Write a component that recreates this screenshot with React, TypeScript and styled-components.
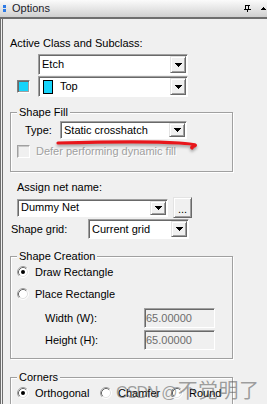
import React from "react";
import styled, { createGlobalStyle } from "styled-components";

const GlobalStyle = createGlobalStyle`
    html, body {
        margin: 0;
        padding: 0;
        background: #f0f0f0;
    }
    body {
        font-family: "Liberation Sans", Arial, sans-serif;
        font-size: 11px;
        color: #000;
    }
`;

const Window = styled.div`
    position: relative;
    width: 267px;
    height: 404px;
    overflow: hidden;
    display: flex;
    flex-direction: column;
    background: #f0f0f0;
`;

const TitleBar = styled.div`
    flex: none;
    height: 17px;
    display: flex;
    align-items: center;
    padding: 0 1px 0 3px;
    background: linear-gradient(#fbfbfb, #e4e4e4 55%, #cfcfcf);
    border-bottom: 2px solid #6e6e6e;
`;

const Grip = styled.div`
    display: flex;
    flex-direction: column;
    gap: 1px;
    margin-right: 6px;

    span {
        width: 3px;
        height: 3px;
        background: #2f7be6;
    }
`;

const TitleText = styled.div`
    font-size: 11px;
    color: #1c1c2a;
    line-height: 13px;
`;

const TitleTools = styled.div`
    margin-left: auto;
    display: flex;
    align-items: center;
    gap: 10px;
`;

const Panel = styled.div`
    flex: 1;
    display: flex;
    flex-direction: column;
    border-left: 3px double #6e6e6e;
`;

const Label = styled.div<{ $top: number; $left: number }>`
    margin: ${(p) => p.$top}px 0 0 ${(p) => p.$left}px;
    line-height: 13px;
    white-space: nowrap;
`;

const Row = styled.div<{ $top: number; $left: number; $h: number }>`
    display: flex;
    align-items: center;
    height: ${(p) => p.$h}px;
    margin: ${(p) => p.$top}px 0 0 ${(p) => p.$left}px;
    white-space: nowrap;
`;

const FieldLabel = styled.div<{ $w: number }>`
    width: ${(p) => p.$w}px;
    flex: none;
    line-height: 13px;
`;

const SelectBox = styled.div<{ $w: number; $h: number }>`
    box-sizing: border-box;
    flex: none;
    width: ${(p) => p.$w}px;
    height: ${(p) => p.$h}px;
    display: flex;
    align-items: stretch;
    padding: 1px;
    background: #fff;
    border: 1px solid;
    border-color: #a0a0a0 #ffffff #ffffff #a0a0a0;
    box-shadow: inset 1px 1px 0 #696969;
`;

const SelectText = styled.div`
    flex: 1;
    display: flex;
    align-items: center;
    padding-left: 2px;
    line-height: 13px;
    overflow: hidden;
`;

const ColorChip = styled.span`
    box-sizing: border-box;
    width: 10px;
    height: 14px;
    margin: 0 7px 0 1px;
    border: 1px solid #000;
    background: #17d4fa;
`;

const DropButton = styled.div`
    box-sizing: border-box;
    width: 16px;
    flex: none;
    display: flex;
    align-items: center;
    justify-content: center;
    background: #f0f0f0;
    border: 1px solid;
    border-color: #e3e3e3 #696969 #696969 #e3e3e3;
    box-shadow: inset 1px 1px 0 #fff, inset -1px -1px 0 #a0a0a0;
`;

const Swatch = styled.div`
    box-sizing: border-box;
    width: 13px;
    height: 13px;
    margin-right: 8px;
    background: #17d4fa;
    border: 1px solid;
    border-color: #808080 #ffffff #ffffff #808080;
    box-shadow: inset 1px 1px 0 #696969, inset -1px -1px 0 #a0a0a0;
`;

const Group = styled.div<{ $top: number; $h: number }>`
    box-sizing: border-box;
    width: 223px;
    height: ${(p) => p.$h}px;
    margin: ${(p) => p.$top}px 0 0 7px;
    display: flex;
    flex-direction: column;
    border: 1px solid #a0a0a0;
    box-shadow: 1px 1px 0 #fff, inset 1px 1px 0 #fff;
`;

const Legend = styled.div`
    align-self: flex-start;
    margin: -7px 0 0 6px;
    padding: 0 2px;
    line-height: 13px;
    background: #f0f0f0;
`;

const CheckBox = styled.div`
    box-sizing: border-box;
    width: 13px;
    height: 13px;
    margin-right: 6px;
    background: #f0f0f0;
    border: 1px solid;
    border-color: #a0a0a0 #ffffff #ffffff #a0a0a0;
    box-shadow: inset 1px 1px 0 #c8c8c8;
`;

const DisabledText = styled.div`
    color: #a0a0a0;
    text-shadow: 1px 1px 0 #fff;
    line-height: 13px;
`;

const SmallButton = styled.div`
    box-sizing: border-box;
    width: 19px;
    height: 21px;
    margin-left: 5px;
    display: flex;
    align-items: center;
    justify-content: center;
    padding-top: 3px;
    background: #f0f0f0;
    border: 1px solid;
    border-color: #e3e3e3 #696969 #696969 #e3e3e3;
    box-shadow: inset 1px 1px 0 #fff, inset -1px -1px 0 #a0a0a0;
`;

const NumberInput = styled.div`
    box-sizing: border-box;
    width: 71px;
    height: 20px;
    display: flex;
    align-items: center;
    padding-left: 1px;
    color: #6d6d6d;
    background: #f0f0f0;
    border: 1px solid;
    border-color: #a0a0a0 #ffffff #ffffff #a0a0a0;
    box-shadow: inset 1px 1px 0 #696969;
`;

const RadioItem = styled.div<{ $w?: number }>`
    display: flex;
    align-items: center;
    gap: 6px;
    width: ${(p) => (p.$w ? `${p.$w}px` : "auto")};
    flex: none;
    line-height: 13px;
`;

const Annotation = styled.svg`
    position: absolute;
    left: 55px;
    top: 138px;
    filter: drop-shadow(0 2px 1.5px rgba(0, 0, 0, 0.35));
`;

const Watermark = styled.div`
    position: absolute;
    left: 116px;
    top: 375px;
    display: flex;
    align-items: baseline;
    color: rgba(85, 85, 85, 0.55);
    font-family: "Liberation Sans", "Noto Sans CJK SC", sans-serif;
    white-space: nowrap;
`;

const WatermarkLatin = styled.span`
    font-size: 16px;
    letter-spacing: -0.9px;
    margin-right: 1px;
`;

const WatermarkCjk = styled.span`
    font-family: "Noto Sans CJK SC", sans-serif;
    font-size: 20px;
    letter-spacing: 0.5px;
`;

const Arrow = () => (
    <svg width="7" height="4" viewBox="0 0 7 4" shapeRendering="crispEdges">
        <path d="M0 0h7v1H0zM1 1h5v1H1zM2 2h3v1H2zM3 3h1v1H3z" fill="#000" />
    </svg>
);

const Select: React.FC<{ w: number; h: number; children?: React.ReactNode }> = ({ w, h, children }) => (
    <SelectBox $w={w} $h={h}>
        <SelectText>{children}</SelectText>
        <DropButton>
            <Arrow />
        </DropButton>
    </SelectBox>
);

const Radio: React.FC<{ checked?: boolean }> = ({ checked }) => (
    <svg width="12" height="12" viewBox="0 0 12 12">
        <circle cx="6" cy="6" r="5" fill="#fff" />
        <path d="M2.11 9.89A5.5 5.5 0 0 1 9.89 2.11" fill="none" stroke="#a0a0a0" />
        <path d="M9.89 2.11A5.5 5.5 0 0 1 2.11 9.89" fill="none" stroke="#ffffff" />
        <path d="M2.82 9.18A4.5 4.5 0 0 1 9.18 2.82" fill="none" stroke="#696969" />
        <path d="M9.18 2.82A4.5 4.5 0 0 1 2.82 9.18" fill="none" stroke="#e3e3e3" />
        {checked && <circle cx="6" cy="6" r="2" fill="#000" />}
    </svg>
);

const App: React.FC = () => {
    return (
        <Window>
            <GlobalStyle />
            <TitleBar>
                <Grip>
                    <span />
                    <span />
                </Grip>
                <TitleText>Options</TitleText>
                <TitleTools>
                    <svg width="7" height="7" viewBox="0 0 7 7" shapeRendering="crispEdges">
                        <path d="M1 0h5v1H1zM1 0h1v4H1zM4 0h1v4H4zM0 4h7v1H0zM3 5h1v2H3z" fill="#000" />
                    </svg>
                    <svg width="5" height="3" viewBox="0 0 5 3" shapeRendering="crispEdges">
                        <path d="M2 0h1v1H2zM1 1h3v1H1zM0 2h5v1H0z" fill="#000" />
                    </svg>
                </TitleTools>
            </TitleBar>

            <Panel>
                <Label $top={18} $left={7}>
                    Active Class and Subclass:
                </Label>
                <Row $top={4} $left={35} $h={21}>
                    <Select w={150} h={21}>Etch</Select>
                </Row>
                <Row $top={1} $left={14} $h={21}>
                    <Swatch />
                    <Select w={150} h={21}>
                        <ColorChip />
                        Top
                    </Select>
                </Row>

                <Group $top={15} $h={60}>
                    <Legend>Shape Fill</Legend>
                    <Row $top={2} $left={14} $h={18}>
                        <FieldLabel $w={35}>Type:</FieldLabel>
                        <Select w={127} h={18}>Static crosshatch</Select>
                    </Row>
                    <Row $top={6} $left={6} $h={13}>
                        <CheckBox />
                        <DisabledText>Defer performing dynamic fill</DisabledText>
                    </Row>
                </Group>

                <Label $top={9} $left={14}>
                    Assign net name:
                </Label>
                <Row $top={3} $left={14} $h={21}>
                    <Select w={151} h={18}>Dummy Net</Select>
                    <SmallButton>...</SmallButton>
                </Row>
                <Row $top={1} $left={8} $h={20}>
                    <FieldLabel $w={77}>Shape grid:</FieldLabel>
                    <Select w={101} h={20}>Current grid</Select>
                </Row>

                <Group $top={17} $h={103}>
                    <Legend>Shape Creation</Legend>
                    <Row $top={2} $left={6} $h={14}>
                        <RadioItem>
                            <Radio checked />
                            Draw Rectangle
                        </RadioItem>
                    </Row>
                    <Row $top={8} $left={6} $h={14}>
                        <RadioItem>
                            <Radio />
                            Place Rectangle
                        </RadioItem>
                    </Row>
                    <Row $top={7} $left={34} $h={20}>
                        <FieldLabel $w={99}>Width (W):</FieldLabel>
                        <NumberInput>65.00000</NumberInput>
                    </Row>
                    <Row $top={2} $left={34} $h={20}>
                        <FieldLabel $w={99}>Height (H):</FieldLabel>
                        <NumberInput>65.00000</NumberInput>
                    </Row>
                </Group>

                <Group $top={18} $h={40}>
                    <Legend>Corners</Legend>
                    <Row $top={2} $left={6} $h={14}>
                        <RadioItem $w={83}>
                            <Radio checked />
                            Orthogonal
                        </RadioItem>
                        <RadioItem $w={71}>
                            <Radio />
                            Chamfer
                        </RadioItem>
                        <RadioItem>
                            <Radio />
                            Round
                        </RadioItem>
                    </Row>
                </Group>
            </Panel>

            <Annotation width="142" height="14" viewBox="0 0 142 14">
                <path
                    d="M3 5C40 4 95 3 124 5S134 8 137 10"
                    fill="none"
                    stroke="#e8161b"
                    strokeWidth="3.2"
                    strokeLinecap="round"
                />
            </Annotation>

            <Watermark>
                <WatermarkLatin>CSDN @</WatermarkLatin>
                <WatermarkCjk>不觉明了</WatermarkCjk>
            </Watermark>
        </Window>
    );
};

export default App;
